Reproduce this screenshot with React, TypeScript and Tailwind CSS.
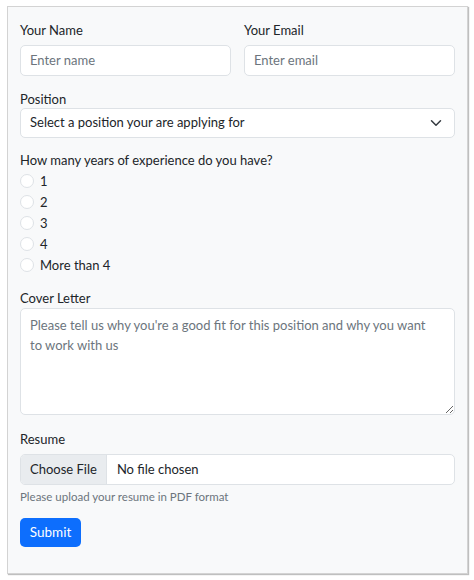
import React from "react";

const font = { fontFamily: 'Lato, "Open Sans", Arial, sans-serif' };

function Radio({ label }: { label: string }) {
  return (
    <div className="flex h-[21px] items-center">
      <span className="h-[14px] w-[14px] rounded-full border border-[#dee2e6] bg-white" />
      <span className="ml-[6px] text-[13px] leading-[20px] text-[#212529]">{label}</span>
    </div>
  );
}

export default function App() {
  return (
    <div className="h-[580px] w-[474px] bg-white pl-[7px] pt-[6px]" style={font}>
      <div className="h-[568px] w-[461px] border border-[#d3d3d3] bg-[#f8f9fa] px-[12px] pt-[13px] shadow-[1px_1px_1px_rgba(0,0,0,0.25)]">
        <div className="grid grid-cols-2 gap-[13px]">
          <div>
            <div className="mb-[5px] text-[13px] leading-[20px] text-[#212529]">Your Name</div>
            <div className="flex h-[31px] items-center rounded-[5px] border border-[#dee2e6] bg-white px-[9px] text-[13px] text-[#6c757d]">
              Enter name
            </div>
          </div>
          <div>
            <div className="mb-[5px] text-[13px] leading-[20px] text-[#212529]">Your Email</div>
            <div className="flex h-[31px] items-center rounded-[5px] border border-[#dee2e6] bg-white px-[9px] text-[13px] text-[#6c757d]">
              Enter email
            </div>
          </div>
        </div>

        <div className="mt-[14px] text-[13px] leading-[18px] text-[#212529]">Position</div>
        <div className="flex h-[30px] items-center justify-between rounded-[5px] border border-[#dee2e6] bg-white pl-[9px] pr-[12px] text-[13px] text-[#212529]">
          <span>Select a position your are applying for</span>
          <svg width="12" height="12" viewBox="0 0 16 16" fill="none" stroke="#343a40" strokeWidth="2" strokeLinecap="round" strokeLinejoin="round">
            <path d="M2 5l6 6 6-6" />
          </svg>
        </div>

        <div className="mt-[12px] text-[13px] leading-[20px] text-[#212529]">How many years of experience do you have?</div>
        <Radio label="1" />
        <Radio label="2" />
        <Radio label="3" />
        <Radio label="4" />
        <Radio label="More than 4" />

        <div className="mt-[13px] text-[13px] leading-[20px] text-[#212529]">Cover Letter</div>
        <textarea
          className="block h-[107px] w-full resize-y rounded-[5px] border border-[#dee2e6] bg-white py-[6px] pl-[9px] pr-[18px] text-[13px] leading-[20px] text-[#212529] outline-none placeholder:text-[#6c757d]"
          placeholder="Please tell us why you're a good fit for this position and why you want to work with us"
          style={font}
        />

        <div className="mt-[14px] mb-[5px] text-[13px] leading-[20px] text-[#212529]">Resume</div>
        <div className="flex h-[31px] items-stretch overflow-hidden rounded-[5px] border border-[#dee2e6] bg-white text-[13px] text-[#212529]">
          <span className="flex items-center border-r border-[#dee2e6] bg-[#e9ecef] px-[9px]">Choose File</span>
          <span className="flex items-center pl-[10px]">No file chosen</span>
        </div>
        <div className="mt-[3px] text-[11.5px] leading-[17px] text-[#6c757d]">Please upload your resume in PDF format</div>

        <div className="mt-[13px] flex h-[29px] w-[61px] items-center justify-center rounded-[5px] bg-[#0d6efd] text-[13.5px] text-white">
          Submit
        </div>
      </div>
    </div>
  );
}
